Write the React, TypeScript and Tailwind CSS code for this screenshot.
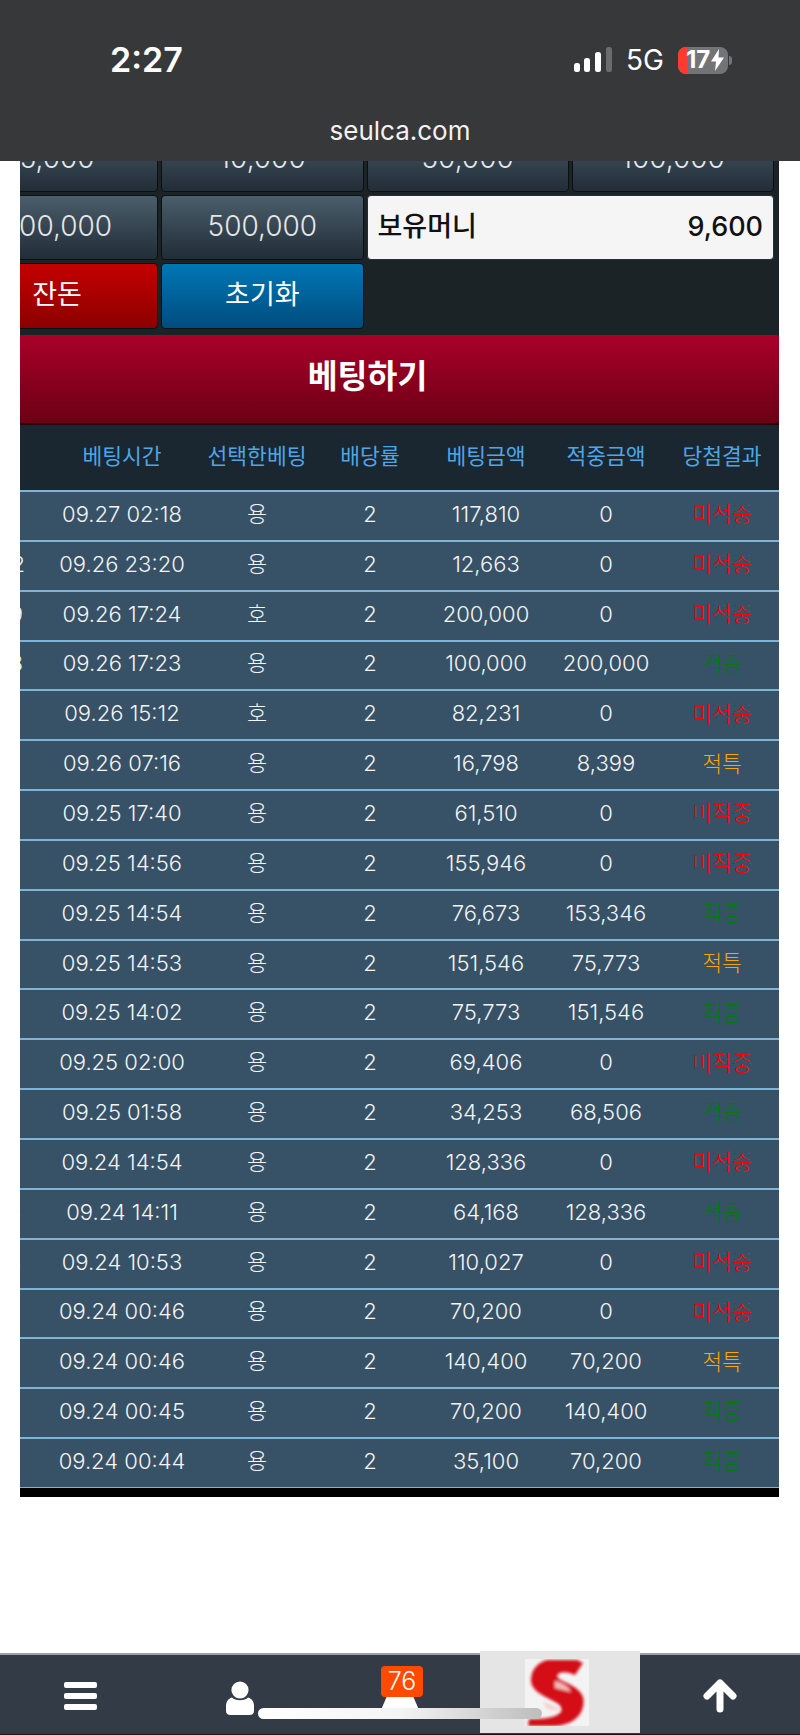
const FONT = "font-['Inter','Noto_Sans_CJK_KR',sans-serif]";

type Row = [string, string, string, string, string, string, string];

const rows: Row[] = [
  ["", "09.27 02:18", "용", "117,810", "0", "미적중", ""],
  ["12", "09.26 23:20", "용", "12,663", "0", "미적중", "pr-[20px]"],
  ["9", "09.26 17:24", "호", "200,000", "0", "미적중", "pr-[22px]"],
  ["8", "09.26 17:23", "용", "100,000", "200,000", "적중", "pr-[22px]"],
  ["", "09.26 15:12", "호", "82,231", "0", "미적중", ""],
  ["", "09.26 07:16", "용", "16,798", "8,399", "적특", ""],
  ["", "09.25 17:40", "용", "61,510", "0", "미적중", ""],
  ["", "09.25 14:56", "용", "155,946", "0", "미적중", ""],
  ["", "09.25 14:54", "용", "76,673", "153,346", "적중", ""],
  ["", "09.25 14:53", "용", "151,546", "75,773", "적특", ""],
  ["", "09.25 14:02", "용", "75,773", "151,546", "적중", ""],
  ["", "09.25 02:00", "용", "69,406", "0", "미적중", ""],
  ["", "09.25 01:58", "용", "34,253", "68,506", "적중", ""],
  ["", "09.24 14:54", "용", "128,336", "0", "미적중", ""],
  ["4", "09.24 14:11", "용", "64,168", "128,336", "적중", "pr-[24px]"],
  ["3", "09.24 10:53", "용", "110,027", "0", "미적중", "pr-[24px]"],
  ["", "09.24 00:46", "용", "70,200", "0", "미적중", ""],
  ["", "09.24 00:46", "용", "140,400", "70,200", "적특", ""],
  ["", "09.24 00:45", "용", "70,200", "140,400", "적중", ""],
  ["", "09.24 00:44", "용", "35,100", "70,200", "적중", ""],
];

const resultColor: Record<string, string> = {
  미적중: "text-[#ff0000]",
  적중: "text-[#007a0c]",
  적특: "text-[#ffa500]",
};

const COLS = "grid grid-cols-[89px_154px_116px_110px_122px_118px_114px]";
const CHIP =
  "flex items-center justify-center rounded-[4px] border border-[#0b1014] bg-gradient-to-b from-[#4b5e6c] to-[#212d37] pb-[3px] text-[28px] font-light text-[#e6e6e6]";

function Signal() {
  return (
    <svg width="38" height="26" viewBox="0 0 38 26" className="block">
      <rect x="0" y="16" width="6" height="9" rx="2.5" fill="#fff" />
      <rect x="10" y="11" width="6" height="14" rx="2.5" fill="#fff" />
      <rect x="21" y="5" width="6" height="20" rx="2.5" fill="#fff" />
      <rect x="32" y="0" width="6" height="25" rx="2.5" fill="#6b6c6e" />
    </svg>
  );
}

function Battery() {
  return (
    <div className="flex items-center gap-[1px]">
      <div className="flex h-[27px] w-[50px] items-center overflow-hidden rounded-[8px] bg-[#737477]">
        <div className="h-full w-[9px] bg-[#ff3b30]" />
        <span className="ml-[-1px] text-[24px] font-bold leading-none text-white">17</span>
        <svg width="13" height="22" viewBox="0 0 13 22" className="ml-[1px]">
          <path d="M8 0 L0 12.5 H5 L4 22 L13 8.5 H7.5 Z" fill="#fff" />
        </svg>
      </div>
      <div className="h-[9px] w-[3px] rounded-r-full bg-[#737477]" />
    </div>
  );
}

function Hamburger() {
  return (
    <div className="flex w-[33px] flex-col gap-[5px] pt-[3px]">
      <div className="h-[6px] rounded-[2px] bg-white" />
      <div className="h-[6px] rounded-[2px] bg-white" />
      <div className="h-[6px] rounded-[2px] bg-white" />
    </div>
  );
}

function PersonIcon() {
  return (
    <svg width="28" height="34" viewBox="0 0 28 34" className="block">
      <circle cx="14" cy="9" r="8.6" fill="#fff" />
      <path
        d="M6 16.5 C9 20 19 20 22 16.5 C26 17.5 28 21 28 25 V30 C28 32.5 26 34 24 34 H4 C2 34 0 32.5 0 30 V25 C0 21 2 17.5 6 16.5 Z"
        fill="#fff"
      />
    </svg>
  );
}

function UpArrow() {
  return (
    <svg width="36" height="34" viewBox="0 0 36 34" className="mt-[3px] block">
      <path
        d="M18 4 L31 17 M18 4 L5 17 M18 4 V30"
        stroke="#fff"
        strokeWidth="7"
        strokeLinecap="round"
        strokeLinejoin="round"
        fill="none"
      />
    </svg>
  );
}

function Logo() {
  return (
    <div className="mr-[6px] h-[67px] w-[64px] bg-[#f3f3f3]">
      <svg width="64" height="67" viewBox="0 0 64 67" className="block">
        <defs>
          <filter id="logoBlur" x="-10%" y="-10%" width="120%" height="120%">
            <feGaussianBlur stdDeviation="1.4" />
          </filter>
        </defs>
        <g filter="url(#logoBlur)">
          <path
            d="M22 1 H52 L58 4 L50 16 C44 13 37 12 33 15 C30 19 36 21 42 24 C54 30 61 36 58 48 C55 60 44 66 30 67 H3 L4 60 C12 60 22 60 30 57 C38 54 38 48 32 44 C22 38 6 33 6 21 C6 10 14 3 22 1 Z"
            fill="#d40f14"
          />
          <path d="M30 22 C38 24 44 28 46 33 L30 29 Z" fill="#f2b9b9" />
          <path d="M18 42 C26 46 32 48 36 52 L22 50 Z" fill="#f6d0d0" />
        </g>
      </svg>
    </div>
  );
}

export default function App() {
  return (
    <div className={`relative flex h-[1735px] w-[800px] flex-col overflow-hidden bg-white ${FONT}`}>
      {/* Browser status bar */}
      <div className="flex h-[161px] shrink-0 flex-col bg-[#37383a] text-white">
        <div className="flex items-center justify-between pl-[110px] pr-[68px] pt-[41px]">
          <span className="text-[34px] font-semibold leading-[38px]">2:27</span>
          <div className="flex items-center">
            <Signal />
            <span className="ml-[14px] text-[28px] leading-none">5G</span>
            <div className="ml-[14px]">
              <Battery />
            </div>
          </div>
        </div>
        <div className="mt-[37px] text-center text-[26px] leading-[30px] text-[#f2f2f2]">seulca.com</div>
      </div>

      {/* Clipped page content */}
      <div className="ml-[20px] h-[1336px] w-[759px] shrink-0 overflow-hidden bg-[#1b2327]">
        <div className="ml-[-64px] mt-[-34px] w-[823px]">
          <div className="grid w-[818px] grid-cols-4 gap-x-[3px] gap-y-[3px]">
            <div className={`h-[65px] ${CHIP}`}>5,000</div>
            <div className={`h-[65px] ${CHIP}`}>10,000</div>
            <div className={`h-[65px] ${CHIP}`}>50,000</div>
            <div className={`h-[65px] ${CHIP}`}>100,000</div>
            <div className={`h-[65px] ${CHIP}`}>300,000</div>
            <div className={`h-[65px] ${CHIP}`}>500,000</div>
            <div className="col-span-2 flex h-[65px] items-center justify-between rounded-[4px] border border-[#20303f] bg-[#f5f5f5] px-[10px] text-[27px] font-medium text-[#111]">
              <span>보유머니</span>
              <span>9,600</span>
            </div>
            <div className="flex h-[66px] items-center justify-center rounded-[4px] border border-[#0b1014] bg-gradient-to-b from-[#c40000] to-[#8c0000] pb-[2px] text-[27px] text-white">
              잔돈
            </div>
            <div className="flex h-[66px] items-center justify-center rounded-[4px] border border-[#0b1014] bg-gradient-to-b from-[#0077b5] to-[#004c7e] pb-[2px] text-[27px] text-white">
              초기화
            </div>
          </div>

          <div className="mt-[6px] flex h-[90px] items-center justify-center rounded-t-[3px] border-b-2 border-[#2a0008] bg-gradient-to-b from-[#aa0029] to-[#6c0015] pb-[4px] text-[32.5px] font-bold text-white">
            베팅하기
          </div>

          <div className={`${COLS} h-[65px] items-center bg-[#1a2630] pb-[2px] text-center text-[21.5px] text-[#4da6e6]`}>
            <div />
            <div>베팅시간</div>
            <div>선택한베팅</div>
            <div>배당률</div>
            <div>베팅금액</div>
            <div>적중금액</div>
            <div>당첨결과</div>
          </div>

          {rows.map((r, i) => (
            <div
              key={i}
              className={`${COLS} h-[49.85px] items-center border-t-2 border-[#7fb4d6] bg-[#375267] pb-[3px] text-center text-[22px] font-light text-[#f4f4f4]`}
            >
              <div className={`text-right ${r[6]}`}>{r[0]}</div>
              <div>{r[1]}</div>
              <div>{r[2]}</div>
              <div>2</div>
              <div>{r[3]}</div>
              <div>{r[4]}</div>
              <div className={`text-[21.5px] ${resultColor[r[5]]}`}>{r[5]}</div>
            </div>
          ))}
          <div className="h-[10px] border-t border-[#7fb4d6] bg-black" />
        </div>
      </div>

      {/* Fixed bottom bar */}
      <div className="mt-auto grid h-[82px] shrink-0 grid-cols-5 border-t-2 border-[#9ca1a6] border-b border-b-[#1a1a1a] bg-[#323b46]">
        <div className="flex items-center justify-center">
          <Hamburger />
        </div>
        <div className="flex items-center justify-center pt-[6px]">
          <PersonIcon />
        </div>
        <div className="relative">
          <div className="absolute left-[61px] top-[11px] z-10 flex h-[31px] w-[42px] items-center justify-center rounded-[4px] bg-[#ff4a00] text-[25px] font-light text-white">
            76
          </div>
          <svg width="38" height="14" viewBox="0 0 38 14" className="absolute left-[61px] top-[41px]">
            <path d="M6 0 H32 L38 14 H0 Z" fill="#fff" />
          </svg>
        </div>
        <div className="mt-[-4px] flex h-[82px] items-center justify-center bg-[#e5e5e5]">
          <Logo />
        </div>
        <div className="flex items-center justify-center">
          <UpArrow />
        </div>
      </div>

      {/* iOS home indicator */}
      <div className="absolute left-[258px] top-[1708px] h-[11px] w-[284px] rounded-full bg-gradient-to-r from-white via-[#f4f4f4] to-[#bdbdbd]" />
    </div>
  );
}
